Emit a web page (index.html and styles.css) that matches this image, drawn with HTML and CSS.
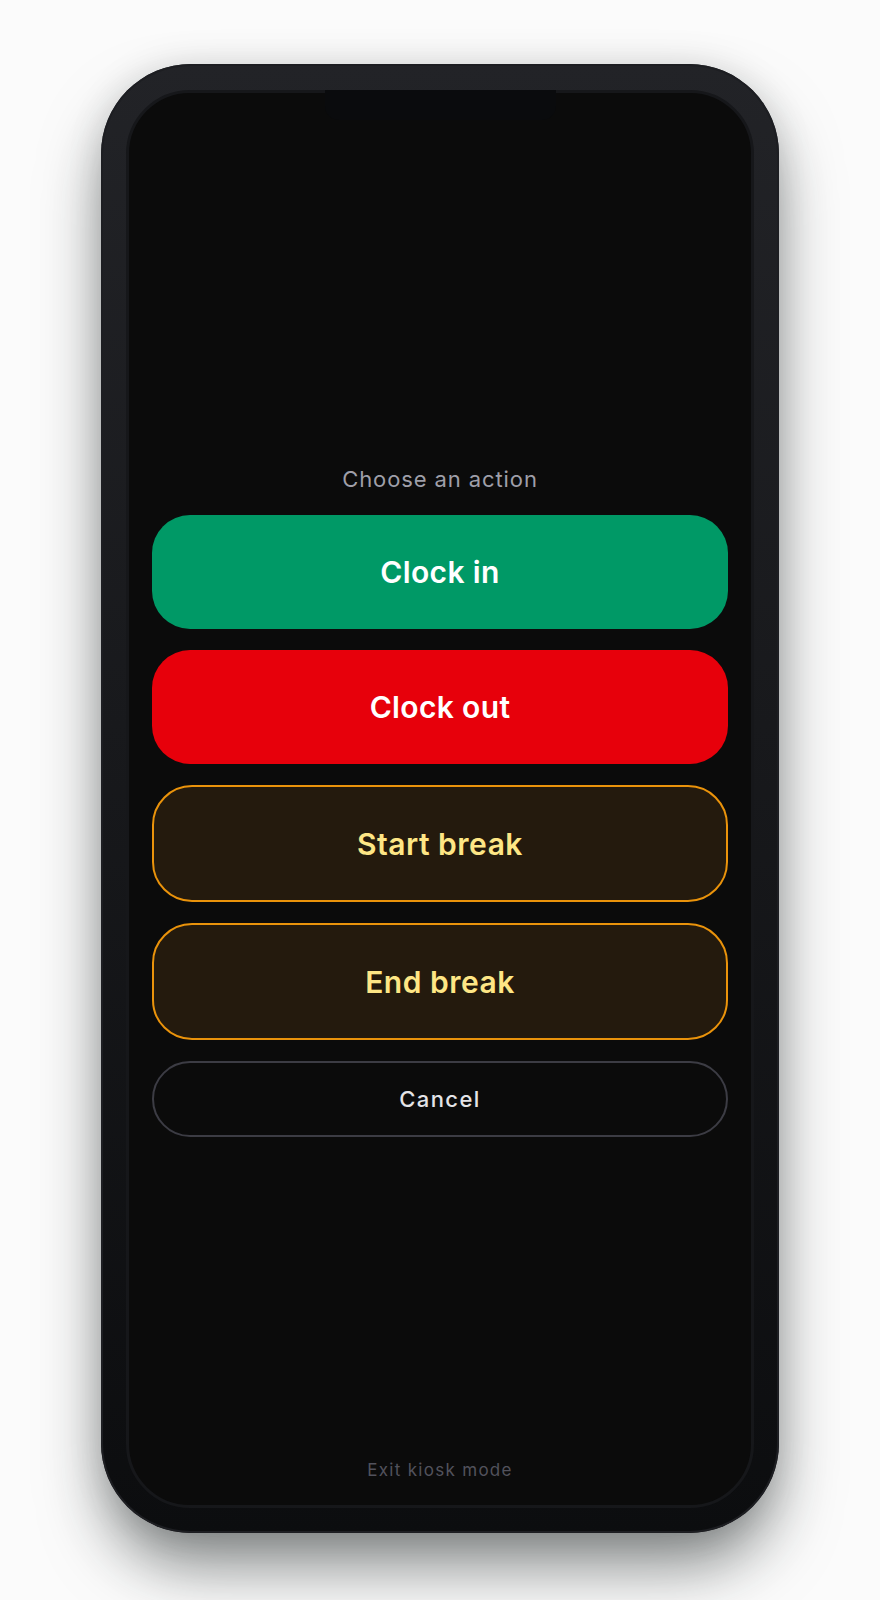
FILE: index.html
```html
<!DOCTYPE html>
<html lang="en">
<head>
<meta charset="utf-8">
<title>Kiosk – Choose an action</title>
<link rel="stylesheet" href="styles.css">
</head>
<body>
  <div class="phone">
    <div class="screen">
      <div class="notch"></div>
      <main class="actions">
        <p class="prompt">Choose an action</p>
        <button class="btn btn-in">Clock in</button>
        <button class="btn btn-out">Clock out</button>
        <button class="btn btn-break">Start break</button>
        <button class="btn btn-break">End break</button>
        <button class="btn btn-cancel">Cancel</button>
      </main>
      <footer class="footer">
        <a class="exit" href="#">Exit kiosk mode</a>
      </footer>
    </div>
  </div>
</body>
</html>
```
FILE: styles.css
```css
* { box-sizing: border-box; }

html, body {
  margin: 0;
  padding: 0;
}

body {
  background: #fbfbfb;
  font-family: Inter, "Noto Sans", "Liberation Sans", sans-serif;
  padding-top: 64px;
  height: 1600px;
  overflow: hidden;
}

.phone {
  width: 678px;
  height: 1469px;
  margin: 0 auto;
  border-radius: 90px;
  padding: 26px 25px 25px 25px;
  background: linear-gradient(180deg, #222327 0%, #18191c 45%, #0c0d0f 100%);
  box-shadow:
    inset 0 0 0 2px #1d1e22,
    0 36px 64px -6px rgba(20, 28, 28, 0.55),
    0 0 36px rgba(0, 0, 0, 0.10);
}

.screen {
  position: relative;
  height: 100%;
  border: 3px solid #16171a;
  border-radius: 64px;
  background: #0b0b0b;
  display: flex;
  flex-direction: column;
  padding: 372px 23px 24px 23px;
}

.notch {
  position: absolute;
  top: -3px;
  left: 196px;
  width: 231px;
  height: 30px;
  background: #0a0b0d;
  border-radius: 0 0 14px 14px;
}

.actions {
  display: flex;
  flex-direction: column;
  gap: 21px;
}

.prompt {
  margin: 0 0 1px 0;
  height: 28px;
  line-height: 28px;
  text-align: center;
  color: #9f9fa9;
  font-size: 22px;
  font-weight: 400;
  letter-spacing: 0.9px;
}

.btn {
  display: flex;
  align-items: center;
  justify-content: center;
  width: 100%;
  border: none;
  margin: 0;
  font-family: inherit;
  font-size: 30px;
  font-weight: 600;
  letter-spacing: 0.35px;
  color: #ffffff;
  cursor: pointer;
}

.btn-in {
  height: 114px;
  border-radius: 38px;
  background: #009966;
}

.btn-out {
  height: 114px;
  border-radius: 38px;
  background: #e7000b;
}

.btn-break {
  height: 117px;
  border-radius: 40px;
  background: #241a0d;
  border: 2px solid #ea930b;
  color: #fee685;
  letter-spacing: 0.5px;
}

.btn-cancel {
  height: 76px;
  border-radius: 38px;
  background: transparent;
  border: 2px solid #3c3c44;
  color: #e4e4e7;
  font-size: 22px;
  font-weight: 500;
  letter-spacing: 1.4px;
}

.footer {
  margin-top: auto;
  text-align: center;
}

.exit {
  color: #52525c;
  font-size: 17px;
  line-height: 22px;
  letter-spacing: 1.3px;
  text-decoration: none;
}
```
